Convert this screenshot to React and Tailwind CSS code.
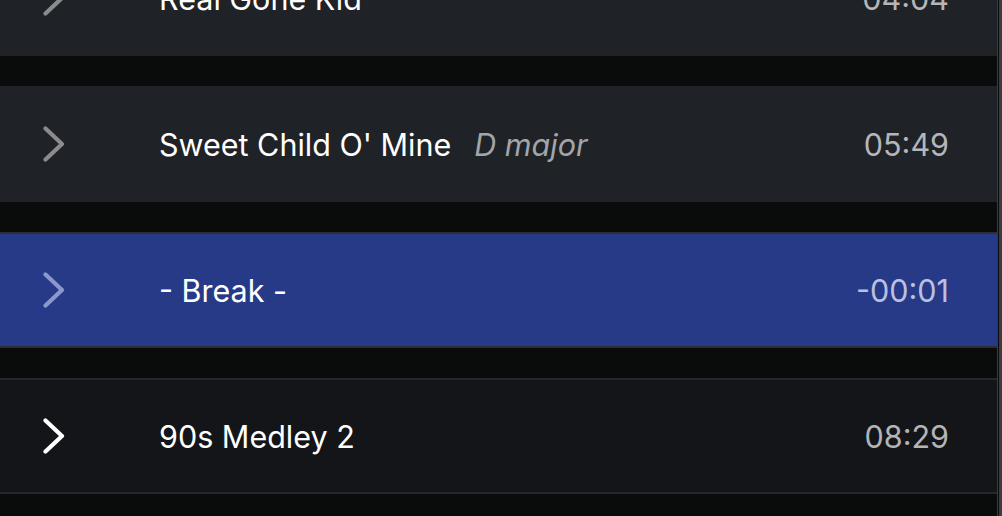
import React from "react";

// --- Setlist rows ---
const SONGS = [
  { id: 1, title: "Real Gone Kid", time: "04:04", variant: "default" },
  { id: 2, title: "Sweet Child O' Mine", keyNote: "D major", time: "05:49", variant: "default" },
  { id: 3, title: "- Break -", time: "-00:01", variant: "active" },
  { id: 4, title: "90s Medley 2", time: "08:29", variant: "medley" },
];

const ROW_STYLES = {
  default: {
    row: "bg-[#1f2226] border-[#1f2226]",
    chevron: "text-[#898b8e]",
    time: "text-[#b4b6b9]",
  },
  active: {
    row: "bg-[#273a87] border-[#2b2e33]",
    chevron: "text-[#8c97cd]",
    time: "text-[#b9c0e0]",
  },
  medley: {
    row: "bg-[#141518] border-[#26272b]",
    chevron: "text-white",
    time: "text-[#b4b4b6]",
  },
};

const Chevron = ({ className }) => (
  <svg
    width="22"
    height="36"
    viewBox="0 0 22 36"
    fill="none"
    className={className}
  >
    <path
      d="M2.5 2.5 L19 18 L2.5 33.5"
      stroke="currentColor"
      strokeWidth="4.2"
      strokeLinecap="round"
      strokeLinejoin="round"
    />
  </svg>
);

const SongRow = ({ song }) => {
  const s = ROW_STYLES[song.variant];
  return (
    <div
      className={`h-[116px] shrink-0 flex items-center border-y-2 pl-[43px] pr-[48px] ${s.row}`}
    >
      <Chevron className={`shrink-0 ${s.chevron}`} />
      <div className="ml-[94px] flex-1 flex items-baseline min-w-0 pt-[2px]">
        <span className="text-white text-[30.5px]">{song.title}</span>
        {song.keyNote && (
          <span className="ml-[23px] italic text-[#a3a5a8] text-[30.5px]">
            {song.keyNote}
          </span>
        )}
      </div>
      <span className={`text-[30.5px] pt-[2px] ${s.time}`}>{song.time}</span>
    </div>
  );
};

export default function App() {
  return (
    <div
      className="w-[1002px] h-[516px] overflow-hidden bg-[#0a0c0c] flex"
      style={{ fontFamily: "Inter, 'Noto Sans', sans-serif" }}
    >
      <div className="flex-1 flex flex-col gap-[30px] mt-[-60px]">
        {SONGS.map((song) => (
          <SongRow key={song.id} song={song} />
        ))}
      </div>
      {/* scrollbar edge */}
      <div className="w-px bg-[#3a3b3e]" />
      <div className="w-px bg-[#0a0c0c]" />
      <div className="w-[3px] bg-[#3b3c3f]" />
    </div>
  );
}
